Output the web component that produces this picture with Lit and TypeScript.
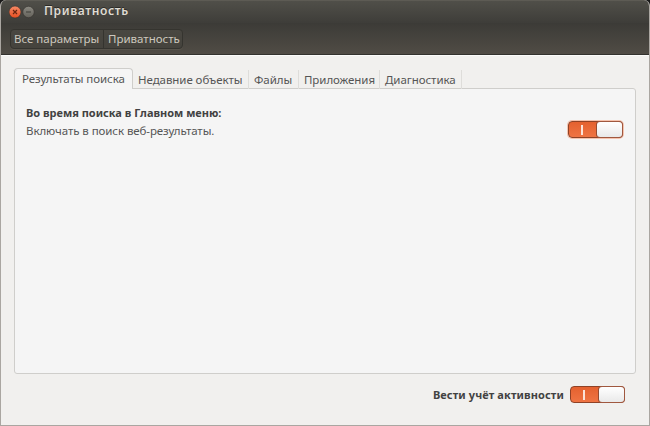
import { LitElement, html, css } from "lit";
import { customElement, property, state } from "lit/decorators.js";
import { classMap } from "lit/directives/class-map.js";

@customElement("ubuntu-switch")
class UbuntuSwitch extends LitElement {
  @property({ type: Boolean, reflect: true }) focused = false;

  static styles = css`
    :host { display: block; width: 55px; height: 17px; border-radius: 4px; flex: none; }
    :host([focused]) { box-shadow: 0 0 0 1px #f5c3ae; }
    .track {
      box-sizing: border-box; display: flex; width: 55px; height: 17px;
      border: 1px solid #8f4226; border-radius: 4px;
      background: linear-gradient(#e4612f, #ef7443);
    }
    .mark { flex: 1; display: flex; align-items: center; justify-content: center; }
    .bar { width: 2px; height: 10px; background: #fbe3d9; margin-right: 1px; }
    .knob {
      box-sizing: border-box; width: 27px; height: 17px; margin: -1px -1px 0 0;
      border: 1px solid #a0583f; border-left-color: #944a30; border-radius: 4px;
      background: linear-gradient(#ffffff, #e9e9e9);
    }
  `;

  render() {
    return html`<div class="track">
      <div class="mark"><div class="bar"></div></div>
      <div class="knob"></div>
    </div>`;
  }
}

@customElement("app-root")
class AppRoot extends LitElement {
  @state() private active = 0;

  private tabs = [
    { label: "Результаты поиска", cls: "t0" },
    { label: "Недавние объекты", cls: "t1" },
    { label: "Файлы", cls: "t2" },
    { label: "Приложения", cls: "t3" },
    { label: "Диагностика", cls: "t4" },
  ];

  static styles = css`
    :host {
      display: block; width: 650px; height: 426px; overflow: hidden; background: #191919;
      font: 11.5px/16px "Noto Sans", "Open Sans", sans-serif; color: #555;
    }
    * { box-sizing: border-box; }
    .window {
      display: flex; flex-direction: column; height: 426px; background: #f1f0ee;
      border: 1px solid #aaa6a1; border-top: 0; border-radius: 6px 6px 0 0; overflow: hidden;
    }
    .head { flex: none; height: 55px; margin: 0 -1px; border-bottom: 1px solid #33322e; }
    .title {
      display: flex; align-items: center; height: 23px; padding-left: 9px;
      border-top: 1px solid #5d5b54; background: linear-gradient(#504f49, #3e3d39);
    }
    .title svg { display: block; flex: none; width: 26px; height: 14px; margin-top: -1px; }
    .name {
      margin: -3px 0 0 9px; font-weight: 600; font-size: 12px; color: #dfdbd2;
      letter-spacing: 0.6px; white-space: nowrap; text-shadow: 0 -1px #2c2b28;
    }
    .toolbar { height: 31px; padding: 6px 0 0 10px; background: linear-gradient(#3c3b37, #504c45); }
    .crumbs {
      display: flex; width: 173px; height: 20px; border: 1px solid #35342f; border-radius: 4px;
      background: linear-gradient(#494741, #45433d); box-shadow: 0 1px #57534b;
    }
    .crumb { padding-left: 3px; line-height: 18px; color: #cdc8be; white-space: nowrap; }
    .c0 { width: 93px; border-right: 1px solid #35342f; }
    .c1 { padding-left: 4px; }
    .body { flex: 1; padding: 13px 13px 0 13px; display: flex; flex-direction: column; border-top: 1px solid #fbfbfa; }
    .tabs { display: flex; height: 21px; margin-top: -1px; z-index: 1; }
    .tab { height: 19px; margin-top: 2px; padding-left: 5px; line-height: 19px; letter-spacing: -0.06px; white-space: nowrap; border-right: 1px solid #deddda; }
    .tab.active {
      height: 21px; margin-top: 0; padding-left: 7px; line-height: 20px; background: #f5f5f5;
      border: 1px solid #cfcecb; border-bottom: 0; border-radius: 4px 4px 0 0;
    }
    .t0 { width: 119px; }
    .t1 { width: 116px; }
    .t2 { width: 50px; }
    .t3 { width: 81px; }
    .t4 { width: 82px; }
    .panel {
      display: flex; justify-content: space-between; align-items: flex-start;
      height: 286px; margin-top: -1px; padding: 16px 12px 0 11px;
      border: 1px solid #cfcecb; border-radius: 0 3px 3px 3px; background: #f5f5f5;
    }
    .strong { font-weight: 700; font-size: 11px; color: #424242; white-space: nowrap; }
    .s1 { letter-spacing: 0.1px; }
    .line { white-space: nowrap; margin-top: 2px; letter-spacing: -0.08px; }
    .panel ubuntu-switch { margin-top: 16px; }
    .foot { display: flex; align-items: center; justify-content: flex-end; gap: 6px; padding: 12px 11px 0 0; }
  `;

  render() {
    return html`<div class="window">
      <div class="head">
        <div class="title">
          <svg viewBox="0 0 26 14">
            <defs>
              <linearGradient id="close" x2="0" y2="1">
                <stop stop-color="#f58a66" /><stop offset="1" stop-color="#e84e20" />
              </linearGradient>
              <linearGradient id="min" x2="0" y2="1">
                <stop stop-color="#8b8981" /><stop offset="1" stop-color="#64625b" />
              </linearGradient>
            </defs>
            <circle cx="6" cy="7" r="6" fill="url(#close)" stroke="#35332f" stroke-width=".6" />
            <path d="M4 5l4 4M8 5l-4 4" stroke="#6b2510" stroke-width="1.2" />
            <circle cx="19.5" cy="7" r="5.7" fill="url(#min)" stroke="#35332f" stroke-width=".6" />
            <path d="M17 7h5" stroke="#3f3e39" stroke-width="1.1" />
          </svg>
          <div class="name">Приватность</div>
        </div>
        <div class="toolbar">
          <div class="crumbs">
            <div class="crumb c0">Все параметры</div>
            <div class="crumb c1">Приватность</div>
          </div>
        </div>
      </div>
      <div class="body">
        <div class="tabs">
          ${this.tabs.map(
            (t, i) => html`<div
              class=${classMap({ tab: true, [t.cls]: true, active: i === this.active })}
              @click=${() => (this.active = i)}
            >${t.label}</div>`
          )}
        </div>
        <div class="panel">
          <div>
            <div class="strong">Во время поиска в Главном меню:</div>
            <div class="line">Включать в поиск веб-результаты.</div>
          </div>
          <ubuntu-switch focused></ubuntu-switch>
        </div>
        <div class="foot">
          <div class="strong s1">Вести учёт активности</div>
          <ubuntu-switch></ubuntu-switch>
        </div>
      </div>
    </div>`;
  }
}
